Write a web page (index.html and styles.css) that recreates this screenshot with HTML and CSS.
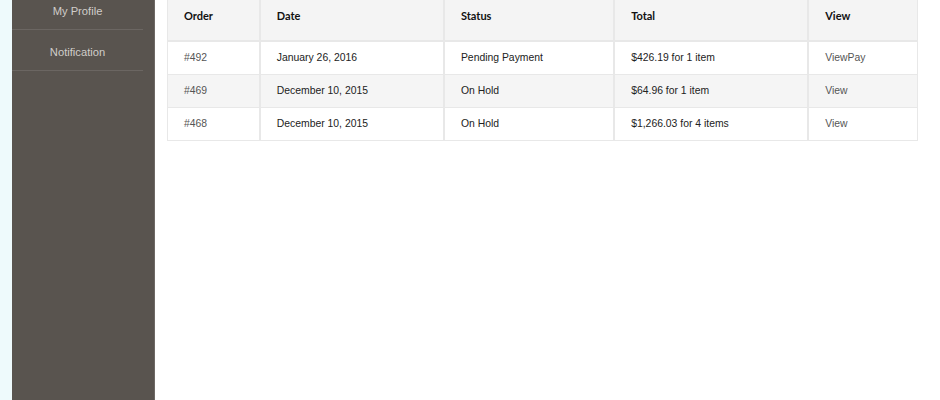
FILE: index.html
```html
<!DOCTYPE html>
<html>
<head>
<meta charset="utf-8">
<link rel="stylesheet" href="styles.css">
</head>
<body>
<div class="page">
  <aside class="sidebar">
    <ul class="menu">
      <li class="menu-item">My Profile</li>
      <li class="menu-item">Notification</li>
    </ul>
  </aside>
  <main class="content">
    <table class="orders">
      <thead>
        <tr>
          <th class="c-order">Order</th>
          <th class="c-date">Date</th>
          <th class="c-status">Status</th>
          <th class="c-total">Total</th>
          <th class="c-view">View</th>
        </tr>
      </thead>
      <tbody>
        <tr>
          <td class="link">#492</td>
          <td>January 26, 2016</td>
          <td>Pending Payment</td>
          <td>$426.19 for 1 item</td>
          <td class="link">ViewPay</td>
        </tr>
        <tr class="alt">
          <td class="link">#469</td>
          <td>December 10, 2015</td>
          <td>On Hold</td>
          <td>$64.96 for 1 item</td>
          <td class="link">View</td>
        </tr>
        <tr>
          <td class="link">#468</td>
          <td>December 10, 2015</td>
          <td>On Hold</td>
          <td>$1,266.03 for 4 items</td>
          <td class="link">View</td>
        </tr>
      </tbody>
    </table>
  </main>
</div>
</body>
</html>
```

FILE: styles.css
```css
html, body {
  margin: 0;
  padding: 0;
  height: 100%;
}
body {
  background: #eefafc;
  font-family: "Liberation Sans", Arial, sans-serif;
  overflow: hidden;
}
.page {
  display: flex;
  height: 400px;
  padding-left: 12px;
}
.sidebar {
  width: 142px;
  background: #59544f;
  border-right: 1px solid #6e6965;
  flex: none;
}
.menu {
  list-style: none;
  margin: -11px 0 0 0;
  padding: 0;
  width: 131px;
}
.menu-item {
  height: 36px;
  line-height: 36px;
  padding-top: 4px;
  border-bottom: 1px solid #6b6662;
  text-align: center;
  color: #d0cdca;
  font-size: 11.2px;
}
.content {
  flex: 1;
  background: #fff;
  padding: 0 22px 0 12px;
}
.orders {
  width: 751px;
  border-collapse: separate;
  border-spacing: 0;
  margin-top: -1px;
  font-size: 10.4px;
}
.orders th, .orders td {
  border: 1px solid #e8e8e8;
  border-top: 0;
  text-align: left;
  padding: 0 16px;
  vertical-align: middle;
}
.orders th {
  background: #f4f4f4;
  font-family: Lato, "Liberation Sans", sans-serif;
  font-weight: 700;
  font-size: 11px;
  color: #111;
  line-height: 34px;
  padding-bottom: 7px;
  border-bottom-width: 2px;
}
.orders td {
  line-height: 32px;
  color: #222;
}
.orders tr.alt td {
  background: #f5f5f5;
}
.orders td.link {
  color: #555;
}
.orders tbody td + td {
  border-left: 1px solid #e8e8e8;
}
.c-order { width: 59px; }
.c-date { width: 151px; }
.c-status { width: 137px; }
.c-total { width: 161px; }
.c-view { width: 76px; }
```
